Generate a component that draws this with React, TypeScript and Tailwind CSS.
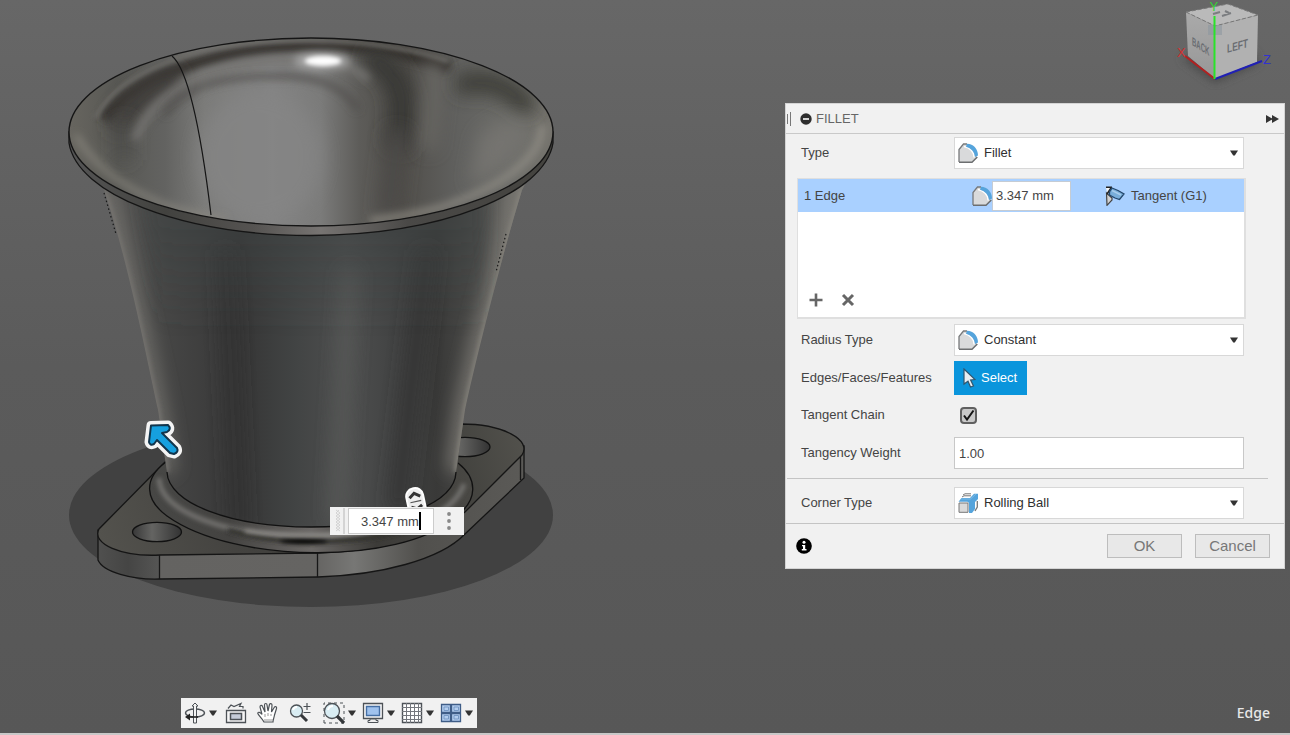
import type { ReactNode } from "react";
import { useState } from "react";

function FilletIcon() {
  return (
    <svg viewBox="0 0 20 20" className="h-5 w-5" aria-hidden="true">
      <path d="M1 19V6.500L5.500 1H10Q19 2 19 11V14L14 19Z" fill="#d9dadb" />
      <path d="M1 19V6.500L5.500 1H9" fill="none" stroke="#77797b" strokeWidth="1.300" />
      <path d="M1 19.200H14L19.300 14" fill="none" stroke="#6c6e70" strokeWidth="1.500" />
      <path d="M6 3.500C12 4.500 16 9 16.200 14.500" fill="none" stroke="#fff" strokeWidth="1.500" />
      <path d="M9 .8C15.500 1 20 6 20 12.500L17 14C16.500 9 13.500 5.500 8 3.800Z" fill="#55a4dc" />
    </svg>
  );
}

function RollingBallIcon() {
  return (
    <svg viewBox="0 0 20 20" className="h-5 w-5" aria-hidden="true">
      <path d="M1 10H10V19.300H1Z" fill="#dadada" stroke="#777" />
      <path d="M5 2L7 .8H13M4 4L6 2.800H13" fill="none" stroke="#777" />
      <path d="M19.300 8V14L17 18" fill="none" stroke="#777" strokeWidth="1.300" />
      <path d="M.5 8.800L3.500 5H12L16 .8H20V6L17 9V16L14 20H11V10L9.500 8.800Z" fill="#55a4dc" />
      <path d="M3 6H12.500L18 1" fill="none" stroke="#7dbbe6" strokeWidth="1" />
    </svg>
  );
}

function TangentIcon() {
  return (
    <svg viewBox="0 0 20 20" className="h-5 w-5" aria-hidden="true">
      <path d="M1.500 7L7 12V14L2 19.300Z" fill="#d3d3d3" stroke="#444" strokeWidth="1.200" />
      <path d="M1 1L6 1.500L2 7Z" fill="#f6f6f6" />
      <path d="M1 1.300H7M6 2L2 8" fill="none" stroke="#222" strokeWidth="1.500" />
      <path d="M7 2L13 4.500L19 8L14.500 13.500L10 12L4.500 9Q4 5 7 2Z" fill="#79aeda" stroke="#25486c" strokeWidth="1.300" />
      <path d="M7 4.500L16 9" stroke="#a9cdec" strokeWidth="1.500" />
    </svg>
  );
}

function Triangle() {
  return (
    <svg viewBox="0 0 8 6" className="pointer-events-none h-[6px] w-2" aria-hidden="true">
      <path d="M0 .5H8L4.800 5.500H3.200Z" fill="#333" />
    </svg>
  );
}

function Row({ label, id, children }: { label: string; id: string; children: ReactNode }) {
  return (
    <div className="flex items-center pl-[15px] pr-10">
      <label htmlFor={id} className="w-[153px] shrink-0">
        {label}
      </label>
      <div className="flex min-w-0 flex-1 items-center">{children}</div>
    </div>
  );
}

function IconSelect({ id, icon, options }: { id: string; icon: ReactNode; options: string[] }) {
  return (
    <div className="relative flex-1">
      <select
        id={id}
        className="block h-8 w-full appearance-none border border-[#d8d8d8] bg-white pr-6 pl-[29px] text-[#303030] outline-none"
      >
        {options.map((o) => (
          <option key={o}>{o}</option>
        ))}
      </select>
      <span className="pointer-events-none absolute inset-y-0 left-1 flex items-center">{icon}</span>
      <span className="pointer-events-none absolute inset-y-0 right-[6px] flex items-center">
        <Triangle />
      </span>
    </div>
  );
}

function FilletPanel() {
  const [chain, setChain] = useState(true);
  return (
    <section
      aria-label="Fillet"
      className="absolute top-[103px] right-[5px] w-[500px] max-w-full border border-[#d4d4d4] bg-[#f1f1f1] text-[13px] leading-4 text-[#444]"
    >
      <header className="flex h-[30px] items-center border-b border-[#c9c9c9] pr-[5px] pl-px">
        <svg viewBox="0 0 4 14" className="h-[14px] w-1" aria-hidden="true">
          <path d="M.5 2V12M3.500 0V14" stroke="#777" />
        </svg>
        <button type="button" aria-label="Collapse" className="ml-[9px]">
          <svg viewBox="0 0 12 12" className="h-3 w-3">
            <circle cx="6" cy="6" r="5.700" fill="#2e2e2e" />
            <path d="M3 6H9" stroke="#fff" strokeWidth="1.600" />
          </svg>
        </button>
        <h2 className="ml-1 flex-1 text-[#666]">FILLET</h2>
        <button type="button" aria-label="Expand">
          <svg viewBox="0 0 13 8" className="h-2 w-[13px]">
            <path d="M0 0L7 4L0 8ZM6 0L13 4L6 8Z" fill="#333" />
          </svg>
        </button>
      </header>

      <div className="pt-[3px]">
        <Row label="Type" id="type">
          <IconSelect id="type" icon={<FilletIcon />} options={["Fillet", "Rule Fillet", "Full Round Fillet"]} />
        </Row>
      </div>

      <div className="mt-[9px] mr-[38px] ml-[11px] flex h-[141px] flex-col justify-between border border-r-2 border-b-2 border-[#dfdfdf] bg-white">
        <div className="flex h-[33px] items-center bg-[#a9d0ff] pl-[6px]">
          <span className="w-[168px]">1 Edge</span>
          <FilletIcon />
          <input
            aria-label="Radius"
            defaultValue="3.347 mm"
            className="h-[30px] w-[79px] border border-[#c5ccd4] bg-white pl-[3px] outline-none"
          />
          <span className="ml-[34px]">
            <TangentIcon />
          </span>
          <span className="ml-[6px]">Tangent (G1)</span>
        </div>
        <div className="flex gap-[18px] px-[11px] pb-[10px]">
          <button type="button" aria-label="Add">
            <svg viewBox="0 0 14 14" className="h-[14px] w-[14px]">
              <path d="M7 .5V13.500M.5 7H13.500" stroke="#666" strokeWidth="2.600" />
            </svg>
          </button>
          <button type="button" aria-label="Remove">
            <svg viewBox="0 0 14 14" className="h-[14px] w-[14px]">
              <path d="M2 2L12 12M12 2L2 12" stroke="#666" strokeWidth="3" />
            </svg>
          </button>
        </div>
      </div>

      <div className="mt-[5px] flex flex-col">
        <Row label="Radius Type" id="radius">
          <IconSelect id="radius" icon={<FilletIcon />} options={["Constant", "Chord Length", "Variable"]} />
        </Row>
        <div className="mt-[5px]">
          <Row label="Edges/Faces/Features" id="select">
            <button
              id="select"
              type="button"
              className="flex h-[34px] items-center gap-[5px] bg-[#0a95dc] pr-[10px] pl-[9px] text-white"
            >
              <svg viewBox="0 0 13 20" className="h-5 w-[13px]" aria-hidden="true">
                <path
                  d="M1 1L12 11.500L7.600 12L10.500 18L7.500 19L5 13.200L1 16Z"
                  fill="#e9eef2"
                  stroke="#31566e"
                  strokeWidth="1.200"
                />
              </svg>
              Select
            </button>
          </Row>
        </div>
        <div className="mt-1 flex h-8 flex-col justify-center">
          <Row label="Tangent Chain" id="chain">
            <span className="relative ml-[6px] h-[17px] w-[17px]">
              <input
                id="chain"
                type="checkbox"
                checked={chain}
                onChange={(e) => setChain(e.target.checked)}
                className="block h-[17px] w-[17px] appearance-none rounded-[4px] border-2 border-[#606060] bg-[#c9c9c9]"
              />
              {chain && (
                <svg viewBox="0 0 17 17" className="pointer-events-none absolute inset-0 h-[17px] w-[17px]">
                  <path d="M4 8.500L7 12.500L13.500 3.500" fill="none" stroke="#151515" strokeWidth="2" />
                </svg>
              )}
            </span>
          </Row>
        </div>
        <div className="mt-[6px]">
          <Row label="Tangency Weight" id="weight">
            <input
              id="weight"
              defaultValue="1.00"
              className="h-8 w-full border border-[#c8c8c8] bg-white px-1 outline-none"
            />
          </Row>
        </div>
      </div>
      <hr className="mt-[9px] mr-4 ml-px border-[#c4c4c4]" />
      <div className="mt-2 mb-1">
        <Row label="Corner Type" id="corner">
          <IconSelect id="corner" icon={<RollingBallIcon />} options={["Rolling Ball", "Setback"]} />
        </Row>
      </div>
      <footer className="flex h-[45px] items-center border-t border-[#c4c4c4] pr-[14px] pl-[10px] text-[15px] text-[#777]">
        <button type="button" aria-label="Information" className="mr-auto">
          <svg viewBox="0 0 16 16" className="h-4 w-4">
            <circle cx="8" cy="8" r="7.800" fill="#000" />
            <circle cx="8" cy="4.200" r="1.500" fill="#fff" />
            <path d="M6 7H9.200V11H10.500V12.500H5.800V11H7V8.300H6Z" fill="#fff" />
          </svg>
        </button>
        <button type="button" className="h-6 w-[75px] border border-[#bdbdbd] bg-[#e8e8e8]">
          OK
        </button>
        <button type="button" className="ml-[13px] h-6 w-[75px] border border-[#bdbdbd] bg-[#e8e8e8]">
          Cancel
        </button>
      </footer>
    </section>
  );
}

function Model() {
  return (
    <svg viewBox="0 0 600 640" className="absolute top-0 left-0 h-[640px] w-[600px]" role="img" aria-label="Velocity stack model">
      <defs>
        <filter id="b2" filterUnits="userSpaceOnUse" x="0" y="0" width="600" height="640"><feGaussianBlur stdDeviation="2" /></filter>
        <filter id="b4" filterUnits="userSpaceOnUse" x="0" y="0" width="600" height="640"><feGaussianBlur stdDeviation="4" /></filter>
        <filter id="b9" filterUnits="userSpaceOnUse" x="0" y="0" width="600" height="640"><feGaussianBlur stdDeviation="9" /></filter>
        <linearGradient id="inside" gradientUnits="userSpaceOnUse" x1="69" y1="0" x2="553" y2="0">
          <stop offset="0" stopColor="#67655f" />
          <stop offset=".1" stopColor="#585854" />
          <stop offset=".2" stopColor="#636361" />
          <stop offset=".28" stopColor="#7b7b79" />
          <stop offset=".42" stopColor="#838383" />
          <stop offset=".52" stopColor="#7b7b7a" />
          <stop offset=".6" stopColor="#5d5c59" />
          <stop offset=".69" stopColor="#504e4a" />
          <stop offset=".8" stopColor="#60605e" />
          <stop offset=".92" stopColor="#6d6d69" />
          <stop offset="1" stopColor="#74726c" />
        </linearGradient>
        <linearGradient id="body" gradientUnits="userSpaceOnUse" x1="105" y1="0" x2="520" y2="0">
          <stop offset="0" stopColor="#5d5c5a" />
          <stop offset=".12" stopColor="#484847" />
          <stop offset=".25" stopColor="#3d3d3d" />
          <stop offset=".33" stopColor="#363636" />
          <stop offset=".45" stopColor="#414343" />
          <stop offset=".58" stopColor="#4e4f4f" />
          <stop offset=".7" stopColor="#424343" />
          <stop offset=".8" stopColor="#393938" />
          <stop offset=".9" stopColor="#4b4b49" />
          <stop offset="1" stopColor="#777671" />
        </linearGradient>
        <linearGradient id="bodyTop" gradientUnits="userSpaceOnUse" x1="0" y1="225" x2="0" y2="330">
          <stop offset="0" stopColor="#3e4343" stopOpacity=".55" />
          <stop offset="1" stopColor="#3e4343" stopOpacity="0" />
        </linearGradient>
        <linearGradient id="rim" x1="0" y1="0" x2="1" y2="0">
          <stop offset="0" stopColor="#555" />
          <stop offset=".2" stopColor="#42423f" />
          <stop offset=".38" stopColor="#555351" />
          <stop offset=".52" stopColor="#777472" />
          <stop offset=".7" stopColor="#4a4947" />
          <stop offset="1" stopColor="#44433f" />
        </linearGradient>
        <linearGradient id="side" gradientUnits="userSpaceOnUse" x1="98" y1="0" x2="525" y2="0">
          <stop offset="0" stopColor="#50504f" />
          <stop offset=".07" stopColor="#454544" />
          <stop offset=".142" stopColor="#555554" />
          <stop offset=".145" stopColor="#646361" />
          <stop offset=".51" stopColor="#656462" />
          <stop offset=".6" stopColor="#777775" />
          <stop offset=".75" stopColor="#51504d" />
          <stop offset="1" stopColor="#5b5a57" />
        </linearGradient>
        <linearGradient id="face" gradientUnits="userSpaceOnUse" x1="98" y1="560" x2="525" y2="430">
          <stop offset="0" stopColor="#54534e" />
          <stop offset=".3" stopColor="#444340" />
          <stop offset=".7" stopColor="#363633" />
          <stop offset="1" stopColor="#53524d" />
        </linearGradient>
        <linearGradient id="hole" x1="0" y1="0" x2="1" y2="0">
          <stop offset="0" stopColor="#383838" />
          <stop offset=".4" stopColor="#646462" />
          <stop offset="1" stopColor="#333" />
        </linearGradient>
        <linearGradient id="ring" gradientUnits="userSpaceOnUse" x1="149" y1="0" x2="474" y2="0">
          <stop offset="0" stopColor="#474745" />
          <stop offset=".25" stopColor="#444341" />
          <stop offset=".5" stopColor="#6b6866" />
          <stop offset=".7" stopColor="#3c3b38" />
          <stop offset="1" stopColor="#494844" />
        </linearGradient>
        <clipPath id="mouth"><ellipse cx="311" cy="132" rx="242" ry="94" /></clipPath>
        <clipPath id="torus"><path d="M166 462C143 479 145 500 167 516C235 565 400 564 453 519C480 500 477 478 458 463Z" /></clipPath>
        <clipPath id="cone"><path d="M104 190C128 260 148 365 158 410L167 472C168 503 230 527 311 527C390 527 455 505 456 472L465 410C478 350 505 245 522 190L553 132H69Z" /></clipPath>
      </defs>

      <ellipse cx="311" cy="515" rx="242" ry="92" fill="#414141" />

      <path d="M98 530V560C103 572 132 580 160 579L318 577C380 575 440 560 465 534L524 478V446H300Z" fill="url(#side)" stroke="#151515" strokeWidth="1.300" />
      <path d="M165 462L99 529C91 544 122 557 160 555L318 553C380 551 430 539 465 512L522 455C532 440 503 424 461 424L300 440Z" fill="url(#face)" stroke="#151515" strokeWidth="1.300" />
      <path d="M159.500 555V579M317.500 553V577M520.500 457V480" stroke="#171717" strokeWidth="1.300" />
      <ellipse cx="157" cy="532" rx="24.500" ry="9.700" fill="url(#hole)" stroke="#111" strokeWidth="1.300" />
      <ellipse cx="465" cy="447" rx="25" ry="9.700" fill="url(#hole)" stroke="#111" strokeWidth="1.300" />

      <path d="M166 462C143 479 145 500 167 516C235 565 400 564 453 519C480 500 477 478 458 463Z" fill="url(#ring)" />
      <g clipPath="url(#torus)">
        <path d="M159 478C160 512 225 536 311 537C390 537 452 520 464 484" fill="none" stroke="#72716e" strokeWidth="5" filter="url(#b2)" />
        <path d="M228 530C280 546 360 546 420 525" fill="none" stroke="#2b2b28" strokeWidth="4" filter="url(#b2)" />
        <ellipse cx="304" cy="541" rx="24" ry="2.500" fill="#000" filter="url(#b2)" />
        <path d="M245 531Q310 540 370 531" fill="none" stroke="#989592" strokeWidth="3" filter="url(#b2)" />
      </g>
      <path d="M166 462C143 479 145 500 167 516C235 565 400 564 453 519C480 500 477 478 458 463" fill="none" stroke="#111" strokeWidth="1.300" />

      <g clipPath="url(#cone)">
        <rect x="69" y="130" width="484" height="400" fill="url(#body)" />
        <path d="M104 190C128 260 148 365 158 410L167 472" fill="none" stroke="#6f6e6a" strokeWidth="16" filter="url(#b9)" />
        <path d="M104 190C128 260 148 365 158 410L167 472" fill="none" stroke="#777571" strokeWidth="4" filter="url(#b2)" />
        <path d="M522 190C505 245 478 350 465 410L456 472" fill="none" stroke="#777570" strokeWidth="18" filter="url(#b9)" />
        <path d="M522 190C505 245 478 350 465 410L456 472" fill="none" stroke="#85837c" strokeWidth="4" filter="url(#b2)" />
        <path d="M225 250L238 530" stroke="#323232" strokeWidth="14" filter="url(#b9)" />
        <path d="M350 270L336 520" stroke="#575857" strokeWidth="14" filter="url(#b9)" />
        <path d="M427 250L397 510" stroke="#353534" strokeWidth="18" filter="url(#b9)" />
        <path d="M140 190H485V330H160Z" fill="url(#bodyTop)" filter="url(#b9)" />
      </g>
      <path d="M167 472C168 503 230 527 311 527C390 527 455 505 456 472" fill="none" stroke="#111" strokeWidth="1.300" />
      <path d="M104 193L116 234M506 234L496 272" fill="none" stroke="#171717" strokeDasharray="1.500 2.500" strokeWidth="1.200" />

      <path d="M69 132V143C77 194 180 235 311 235.500C442 235 545 194 553 143V132Z" fill="url(#rim)" stroke="#151515" strokeWidth="1.300" />
      <ellipse cx="311" cy="132" rx="242" ry="94" fill="url(#inside)" />
      <g clipPath="url(#mouth)">
        <path d="M105 120C125 85 205 45 320 46C370 46 410 52 450 68" fill="none" stroke="#34332f" strokeWidth="13" filter="url(#b4)" />
        <path d="M122 130C118 115 140 95 180 76" fill="none" stroke="#3c3b38" strokeWidth="22" filter="url(#b9)" />
        <path d="M124 120V160" stroke="#4a4a46" strokeWidth="14" filter="url(#b9)" />
        <path d="M365 56C408 72 405 110 398 150" fill="none" stroke="#393834" strokeWidth="26" filter="url(#b9)" />
        <path d="M398 130L388 215" stroke="#4b4a46" strokeWidth="20" filter="url(#b9)" />
        <path d="M465 84C490 78 510 88 525 104" fill="none" stroke="#3d3c37" strokeWidth="22" strokeLinecap="round" filter="url(#b9)" />
        <path d="M95 118C112 85 150 65 205 50C280 34 380 38 448 61" fill="none" stroke="#6e6d69" strokeWidth="3.500" filter="url(#b2)" />
        <path d="M135 140C155 85 225 55 318 61Q355 65 368 80" fill="none" stroke="#767572" strokeWidth="8" filter="url(#b4)" />
        <path d="M165 115C185 82 230 76 285 76Q340 78 358 110" fill="none" stroke="#504e4b" strokeWidth="5" filter="url(#b4)" />
        <path d="M432 60C438 80 432 110 428 150" fill="none" stroke="#6c6a66" strokeWidth="13" filter="url(#b9)" />
        <path d="M480 135Q510 110 530 130Q520 165 470 185Z" fill="#74736f" filter="url(#b9)" />
        <ellipse cx="260" cy="157" rx="62" ry="66" fill="#858585" fillOpacity=".75" filter="url(#b9)" />
        <ellipse cx="322" cy="61" rx="28" ry="8" fill="#aaa" filter="url(#b4)" />
        <ellipse cx="323" cy="61" rx="18" ry="5" fill="#fff" filter="url(#b2)" />
        <path d="M76 135Q100 178 165 205Q190 214 225 220" fill="none" stroke="#8f8c83" strokeWidth="4" filter="url(#b4)" />
        <path d="M542 125C543 158 500 188 440 208Q410 216 370 221" fill="none" stroke="#96938a" strokeWidth="5" filter="url(#b4)" />
      </g>
      <path d="M172 56C190 71 202 140 211 215" fill="none" stroke="#151515" strokeWidth="1.200" />
      <ellipse cx="311" cy="132" rx="242" ry="94" fill="none" stroke="#151515" strokeWidth="1.400" />

      <path d="M151 425.500L168 425Q172 429 167 432L162 433L177 448Q179 452 174 454L170 453L157 440L154 444Q150 446 149 442Z" fill="#f4f4f4" stroke="#f4f4f4" strokeWidth="9" strokeLinejoin="round" />
      <path d="M151 425.500L168 425Q172 429 167 432L162 433L177 448Q179 452 174 454L170 453L157 440L154 444Q150 446 149 442Z" fill="#16a0df" stroke="#12354c" strokeWidth="2" strokeLinejoin="round" />
      <g transform="rotate(-12 416 500)">
        <rect x="407" y="488" width="17" height="29" rx="8" fill="#eee" stroke="#fff" strokeWidth="2" />
        <path d="M410 497L415.500 493L421 497" fill="none" stroke="#333" strokeWidth="3" />
        <path d="M410 501.500H421" stroke="#555" strokeWidth="1.200" />
        <path d="M410 506L415.500 509L421 506" fill="none" stroke="#333" strokeWidth="3" />
      </g>
    </svg>
  );
}

function ViewCube() {
  return (
    <svg viewBox="-10 0 120 90" className="absolute top-0 right-0 h-[90px] w-[120px]" role="img" aria-label="View cube">
      <defs>
        <filter id="cubeShadow" x="-50%" y="-50%" width="200%" height="200%"><feGaussianBlur stdDeviation="4" /></filter>
        <linearGradient id="cubeLeft" x1="0" y1="0" x2="0" y2="1">
          <stop offset="0" stopColor="#aaa" />
          <stop offset="1" stopColor="#979797" />
        </linearGradient>
      </defs>
      <path d="M0 58L35 83L78 64L75 52Z" fill="#4c4c4c" filter="url(#cubeShadow)" />
      <path d="M6 12L35 26V79L8 56Z" fill="url(#cubeLeft)" />
      <path d="M35 26L78 15L77 62L35 79Z" fill="#b1b1b1" />
      <path d="M6 12L48 4L78 15L35 26Z" fill="#bababa" />
      <path d="M6 12L35 26L78 15M6 12L48 4L78 15" fill="none" stroke="#777" strokeWidth="1" strokeDasharray="4 2" />
      <rect x="28" y="25" width="14" height="10" fill="#8e98a0" fillOpacity=".6" />
      <g fontFamily="Liberation Sans, sans-serif" fontWeight="700" fontSize="12" fill="#6a6d72">
        <text transform="matrix(.5 .32 0 1 12 45)">BACK</text>
        <text transform="matrix(.7 -.2 0 1 47 53)">LEFT</text>
      </g>
      <path d="M33 14L40 12M42 16L51 13M45 11L49 13" stroke="#7b7d80" strokeWidth="2" />
      <path d="M35 79L5 56" stroke="#b32020" strokeWidth="2" />
      <path d="M35 79L82 61" stroke="#2020b4" strokeWidth="2" />
      <path d="M34.500 16V79" stroke="#29e329" strokeWidth="2" />
      <g fontSize="13" fontFamily="Liberation Sans, sans-serif">
        <text x="-3" y="57" fill="#d33030">X</text>
        <text x="29.500" y="11" fill="#35d235">Y</text>
        <text x="83" y="64" fill="#3232d0">Z</text>
      </g>
    </svg>
  );
}

function ValueInput() {
  return (
    <div className="absolute top-[507px] left-[330px] flex h-7 w-[134px] items-center bg-[#f1f1f1] text-[13px] text-[#444]">
      <svg viewBox="0 0 16 28" className="h-7 w-4" aria-hidden="true">
        <path d="M6 3L10 6L6 9L10 12L6 15L10 18L6 21L10 24M9 3L6 6L10 9L6 12L10 15L6 18L10 21L6 24" fill="none" stroke="#ccc" strokeWidth=".8" />
        <path d="M14 1V27" stroke="#d4d4d4" strokeWidth="2" />
      </svg>
      <div className="relative ml-[2px]">
        <input
          aria-label="Fillet radius"
          defaultValue="3.347 mm"
          className="block h-[26px] w-[86px] border border-[#ccc] bg-white pl-3 outline-none"
        />
        <span className="absolute top-1 left-[71px] h-[18px] w-[2px] bg-black" />
      </div>
      <button type="button" aria-label="More options" className="ml-[13px]">
        <svg viewBox="0 0 4 18" className="h-[18px] w-1">
          <circle cx="2" cy="2" r="1.900" fill="#888" />
          <circle cx="2" cy="9" r="1.900" fill="#888" />
          <circle cx="2" cy="16" r="1.900" fill="#888" />
        </svg>
      </button>
    </div>
  );
}

const iconClass = "h-[22px] w-[22px]";

function Tool({ label, menu, children }: { label: string; menu?: boolean; children: ReactNode }) {
  return (
    <button
      type="button"
      aria-label={label}
      className={menu ? "flex h-full w-[39px] items-center justify-center gap-[3px]" : "flex h-full w-8 items-center justify-center"}
    >
      <svg viewBox="0 0 22 22" className={iconClass} fill="none" stroke="#4d5257">
        {children}
      </svg>
      {menu && <Triangle />}
    </button>
  );
}

function NavBar() {
  return (
    <nav aria-label="Navigation" className="absolute bottom-[5px] left-[181px] flex h-[30px] w-[296px] items-center bg-[#f1f1f1]">
      <Tool label="Orbit" menu>
        <ellipse cx="11" cy="11" rx="9.500" ry="4" strokeWidth="1.500" />
        <path d="M9.500 21V4H8L11 1L14 4H12.500V21Z" fill="#f4f4f4" strokeWidth="1" />
        <path d="M3 15H14" strokeWidth="1.600" stroke="#222" />
        <path d="M1 15L6 11.500V18.500Z" fill="#222" stroke="none" />
      </Tool>
      <Tool label="Look At">
        <path d="M1.500 8.500H20.500V20.500H1.500Z" fill="#f6f6f6" strokeWidth="1.300" />
        <path d="M5.500 11.500H16.500V17.500H5.500Z" fill="#c5cbd8" strokeWidth="1.500" />
        <path d="M3 6.500L6 3L9 4.500L16 1.500L14.500 4.500H18V6.500" strokeWidth="1.200" />
      </Tool>
      <Tool label="Pan">
        <path d="M7 20C5 16 2 14 .8 11.500C1 9.500 3 10 5 12.500L3 5C3 3 5 3 5.500 4.500L8 10L7.500 3C7.500 1 10 1 10 3L11 9L12.500 2.500C13 1 15 1.500 15 3L14.500 10L17.500 5C18.500 4 20 5 19.500 6.500L17.500 13C17 16 16 18 16 20Z" fill="#fff" strokeWidth="1.200" />
        <path d="M7 18H16M8 12V15M11 11V14M14 12V14" stroke="#999" />
      </Tool>
      <Tool label="Zoom">
        <circle cx="7.500" cy="9" r="6" fill="#d9edf3" strokeWidth="1.300" />
        <path d="M4 8Q5 5 8 5" stroke="#fff" strokeWidth="2" />
        <path d="M12 13L18 19" strokeWidth="3" stroke="#34373a" />
        <path d="M18 1V8M14.500 4.500H21.500M14.500 10.500H21.500" strokeWidth="1.200" />
      </Tool>
      <span className="w-1" />
      <Tool label="Zoom window" menu>
        <path d="M1 21V1H21V21Z" strokeDasharray="3 3" />
        <circle cx="9" cy="9" r="7.500" fill="#d9edf3" strokeWidth="1.300" />
        <path d="M5 8Q6 4 10 4" stroke="#fff" strokeWidth="2" />
        <path d="M14 14L21 21" strokeWidth="3.200" stroke="#34373a" />
      </Tool>
      <Tool label="Display settings" menu>
        <path d="M1.500 1.500H20.500V16.500H1.500Z" fill="#f6f6f6" strokeWidth="1.300" />
        <path d="M4.500 4.500H17.500V13.500H4.500Z" fill="#9fc2ee" stroke="#456fa5" strokeWidth="1.400" />
        <path d="M8 17H14V18.500H16V20.500H6V18.500H8Z" fill="#eee" />
      </Tool>
      <Tool label="Grid and snaps" menu>
        <path d="M1.500 1.500H20.500V20.500H1.500Z" fill="#fff" strokeWidth="1.400" />
        <path d="M5.500 1V21M9.500 1V21M13.500 1V21M17.500 1V21M1 5.500H21M1 9.500H21M1 13.500H21M1 17.500H21" strokeWidth="1" stroke="#74777d" />
      </Tool>
      <Tool label="Viewports" menu>
        <path d="M1.500 2.500H10.500V10.500H1.500ZM11.500 2.500H20.500V10.500H11.500ZM1.500 11.500H10.500V19.500H1.500ZM11.500 11.500H20.500V19.500H11.500Z" fill="#b3cdee" stroke="#3f5d87" strokeWidth="1.300" />
        <path d="M4 5H8.500V8.500H4ZM14 5H18.500V8.500H14ZM4 13.500H8.500V17H4ZM14 13.500H18.500V17H14Z" stroke="#7799c5" strokeWidth="1" />
      </Tool>
    </nav>
  );
}

export default function App() {
  return (
    <main className="relative min-h-screen w-full overflow-hidden border-b-2 border-[#c8c8c8] bg-linear-to-b from-[#676767] via-[#5b5b5b] to-[#575757] font-['Liberation_Sans',Arial,sans-serif]">
      <Model />
      <ValueInput />
      <ViewCube />
      <FilletPanel />
      <NavBar />
      <p className="absolute right-5 bottom-3 font-['Noto_Sans',sans-serif] text-[14px] leading-4 font-medium text-[#e8e8e8]">Edge</p>
    </main>
  );
}
